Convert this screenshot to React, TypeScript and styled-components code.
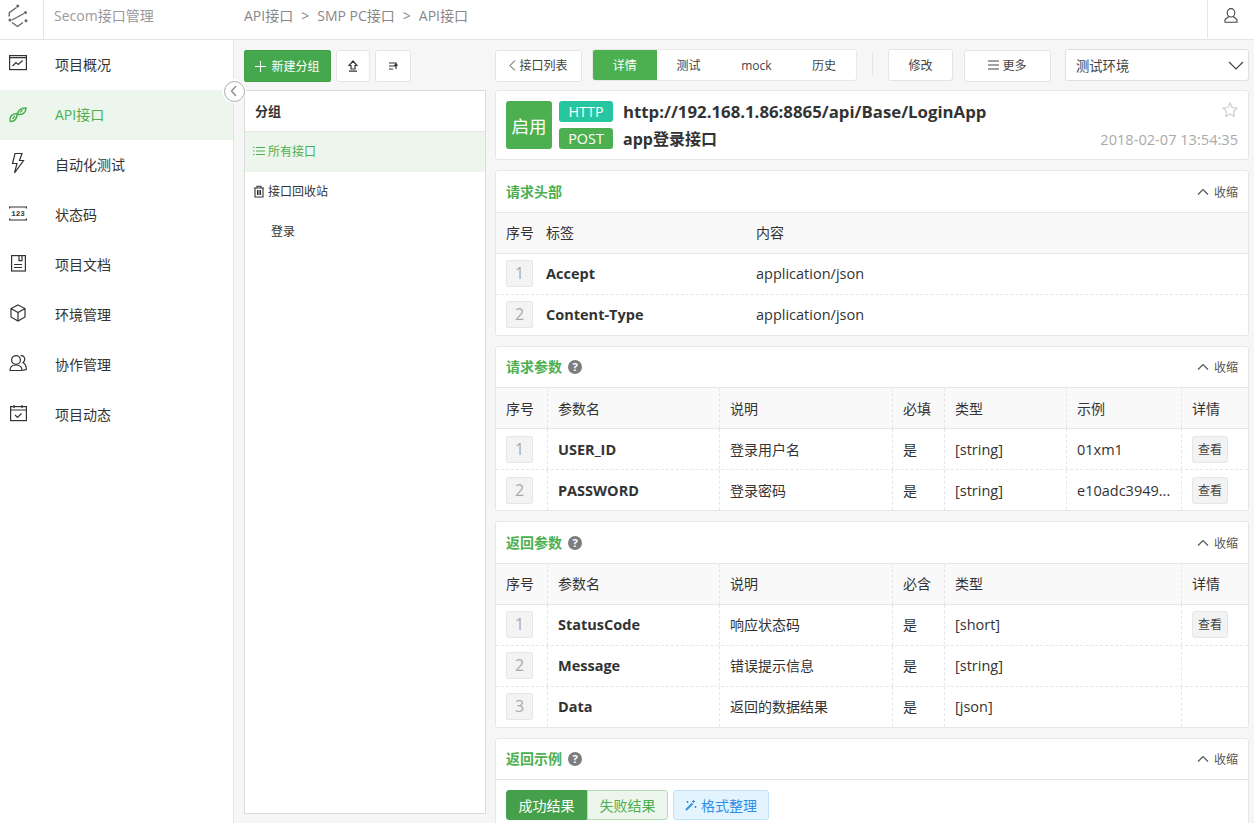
import React from "react";
import styled, { createGlobalStyle } from "styled-components";

const Global = createGlobalStyle`
  html, body { margin: 0; padding: 0; height: 100%; background: #f6f6f6; }
  body { font-family: "Open Sans", "Noto Sans CJK SC", sans-serif; font-size: 14px; color: #333; overflow: hidden; }
  * { box-sizing: border-box; }
`;

const GREEN = "#4caf50";

const Page = styled.div`
  width: 1254px; height: 823px; display: flex; flex-direction: column; overflow: hidden;
`;
const Header = styled.header`
  height: 40px; flex: none; display: flex; background: #fff; border-bottom: 1px solid #e4e4e4;
`;
const LogoCell = styled.div`
  width: 44px; height: 39px; border-right: 1px solid #e4e4e4; padding: 4px 0 0 7px;
`;
const ProjectName = styled.div`
  width: 200px; padding-left: 10px; line-height: 31px; font-size: 14px; color: #999;
`;
const Crumbs = styled.div`
  flex: 1; display: flex; gap: 8px; line-height: 31px; font-size: 14px; color: #888;
`;
const UserCell = styled.div`
  width: 47px; height: 38px; border-left: 1px solid #e4e4e4; display: flex; align-items: center; justify-content: center; padding-bottom: 8px;
`;
const Body = styled.div`
  flex: 1; display: flex; min-height: 0; position: relative;
`;
const Sidebar = styled.nav`
  width: 234px; flex: none; background: #fff; border-right: 1px solid #e4e4e4;
`;
const NavItem = styled.div<{ $active?: boolean }>`
  height: 50px; display: flex; align-items: center; padding: 0 0 2px 9px; gap: 28px; font-size: 14px;
  color: ${(p) => (p.$active ? GREEN : "#333")};
  background: ${(p) => (p.$active ? "#ecf6ec" : "#fff")};
`;
const NavIcon = styled.svg`
  width: 18px; height: 18px; flex: none; fill: none; stroke: currentColor; stroke-width: 1.2; margin-top: -2px; overflow: visible;
`;
const Collapse = styled.div`
  position: absolute; left: 222px; top: 39px; width: 24px; height: 24px; border-radius: 50%; background: #fff; display: flex; align-items: center; justify-content: center;
`;
const CollapseRing = styled.div`
  width: 21px; height: 21px; border-radius: 50%; border: 1.5px solid #aaa; display: flex; align-items: center; justify-content: center;
`;
const LeftCol = styled.div`
  width: 242px; margin-left: 10px; padding-top: 10px; flex: none; display: flex; flex-direction: column;
`;
const BtnRow = styled.div`
  display: flex; gap: 5px; height: 32px; margin-bottom: 8px;
`;
const PrimaryBtn = styled.div`
  width: 87px; height: 32px; background: #46a84c; border-radius: 2px; color: #fff; font-size: 12px; display: flex; align-items: center; justify-content: center; gap: 5px; border: 1px solid #41a047;
`;
const IconBtn = styled.div<{ $w: number }>`
  width: ${(p) => p.$w}px; height: 32px; background: #fff; border: 1px solid #e4e4e4; border-radius: 3px; display: flex; align-items: center; justify-content: center;
`;
const GroupPanel = styled.div`
  width: 242px; height: 724px; background: #fff; border: 1px solid #dcdcdc;
`;
const GroupHead = styled.div`
  height: 41px; line-height: 40px; padding-left: 10px; font-weight: 700; font-size: 13px; border-bottom: 1px solid #e4e4e4;
`;
const GroupItem = styled.div<{ $active?: boolean; $indent?: boolean }>`
  height: 40px; display: flex; align-items: center; gap: 3px; font-size: 12px; padding-bottom: 2px;
  padding-left: ${(p) => (p.$indent ? 26 : 8)}px;
  color: ${(p) => (p.$active ? GREEN : "#333")};
  background: ${(p) => (p.$active ? "#ecf6ec" : "#fff")};
`;
const RightCol = styled.div`
  width: 754px; margin-left: 9px; padding-top: 10px; flex: none; display: flex; flex-direction: column; gap: 10px;
`;
const Toolbar = styled.div`
  height: 30px; display: flex; align-items: flex-start;
`;
const ToolBtn = styled.div<{ $w: number; $ml: number; $up?: boolean }>`
  width: ${(p) => p.$w}px; margin-left: ${(p) => p.$ml}px; margin-top: ${(p) => (p.$up ? -1 : 0)}px; height: 32px; flex: none; background: #fff; border: 1px solid #e4e4e4; border-radius: 3px; font-size: 12px; color: #444; display: flex; align-items: center; justify-content: center; gap: 3px; padding-bottom: ${(p) => (p.$up ? 0 : 2)}px;
`;
const Tabs = styled.div`
  margin: -1px 0 0 10px; width: 265px; height: 32px; flex: none; background: #fff; border: 1px solid #e8e8e8; border-radius: 3px; display: flex; overflow: hidden;
`;
const Tab = styled.div<{ $w: number; $active?: boolean }>`
  width: ${(p) => p.$w}px; font-size: 12px; display: flex; align-items: center; justify-content: center;
  color: ${(p) => (p.$active ? "#fff" : "#444")};
  background: ${(p) => (p.$active ? GREEN : "transparent")};
`;
const Divider = styled.div`
  width: 1px; height: 22px; margin: 3px 0 0 15px; background: #e4e4e4; flex: none;
`;
const SelectBox = styled.div`
  margin: -1px 0 0 14px; width: 184px; height: 32px; flex: none; background: #fff; border: 1px solid #e0e0e0; border-radius: 3px; font-size: 13.3px; color: #444; display: flex; align-items: center; justify-content: space-between; padding: 0 4px 0 10px;
`;
const InfoCard = styled.div`
  height: 70px; background: #fff; border: 1px solid #e6e6e6; border-radius: 3px; padding: 10px; display: flex;
`;
const StateBadge = styled.div`
  width: 46px; height: 48px; background: ${GREEN}; border-radius: 3px; color: #fff; font-size: 17.5px; display: flex; align-items: center; justify-content: center; flex: none;
`;
const MethodCol = styled.div`
  margin-left: 7px; display: flex; flex-direction: column; gap: 6px; flex: none;
`;
const Method = styled.div<{ $c: string }>`
  width: 54px; height: 21px; border-radius: 3px; background: ${(p) => p.$c}; color: #fff; font-size: 14.4px; line-height: 21px; text-align: center;
`;
const TitleCol = styled.div`
  margin-left: 10px; flex: 1; display: flex; flex-direction: column; gap: 5px; font-weight: 700; color: #333;
`;
const UrlLine = styled.div`
  font-size: 16.8px; line-height: 22px;
`;
const NameLine = styled.div`
  font-size: 16px; line-height: 22px;
`;
const CardAside = styled.div`
  flex: none; display: flex; flex-direction: column; align-items: flex-end; justify-content: space-between; height: 48px; padding-top: 1px;
`;
const DateText = styled.div`
  font-size: 14.6px; color: #aaa; line-height: 20px;
`;
const SecHead = styled.div<{ $tall?: boolean }>`
  height: ${(p) => (p.$tall ? 42 : 41)}px; display: flex; align-items: center; padding: 0 10px; border-bottom: 1px solid #e6e6e6;
`;
const SecTitle = styled.div`
  font-size: 14px; font-weight: 700; color: ${GREEN}; line-height: 20px;
`;
const Help = styled.div`
  width: 14px; height: 14px; margin-left: 6px; border-radius: 50%; background: #7d7d7d; color: #fff; font-size: 11px; font-weight: 700; line-height: 14px; text-align: center;
`;
const Fold = styled.div`
  margin-left: auto; display: flex; align-items: center; gap: 5px; font-size: 12px; color: #555;
`;
const Row = styled.div<{ $cols: string; $head?: boolean; $last?: boolean }>`
  display: grid; grid-template-columns: ${(p) => p.$cols};
  height: ${(p) => (p.$last ? 40 : 41)}px;
  background: ${(p) => (p.$head ? "#f9f9f9" : "#fff")};
  border-bottom: ${(p) => (p.$last ? "none" : p.$head ? "1px solid #e6e6e6" : "1px dashed #e6e6e6")};
`;
const Cell = styled.div<{ $dash?: boolean; $bold?: boolean; $cjk?: boolean; $nopad?: boolean }>`
  display: flex; align-items: center; min-width: 0; white-space: nowrap; padding-left: ${(p) => (p.$nopad ? 0 : 10)}px;
  font-size: ${(p) => (p.$cjk ? 14 : 14.5)}px; font-weight: ${(p) => (p.$bold ? 700 : 400)}; color: #333;
  border-right: ${(p) => (p.$dash ? "1px dashed #e6e6e6" : "none")};
`;
const Section = styled.section<{ $raised?: boolean }>`
  background: #fff; border: 1px solid #e6e6e6; border-radius: 3px; flex: none; overflow: hidden;
  ${Cell} { padding-bottom: ${(p) => (p.$raised ? 2 : 0)}px; }
`;
const IndexBadge = styled.div`
  width: 27px; height: 27px; background: #f3f3f3; border: 1px solid #e6e6e6; border-radius: 2px; color: #aaa; font-size: 16px; display: flex; align-items: center; justify-content: center;
`;
const ViewBtn = styled.div`
  width: 36px; height: 27px; background: #f3f3f3; border: 1px solid #e6e6e6; border-radius: 3px; font-size: 12px; color: #444; display: flex; align-items: center; justify-content: center;
`;
const ExampleBar = styled.div`
  display: flex; padding: 10px; height: 50px;
`;
const ResultTab = styled.div<{ $on?: boolean }>`
  width: 81px; height: 30px; font-size: 14px; display: flex; align-items: center; justify-content: center;
  color: ${(p) => (p.$on ? "#fff" : GREEN)};
  background: ${(p) => (p.$on ? "#44a04a" : "#ecf6ec")};
  border: 1px solid ${(p) => (p.$on ? "#44a04a" : "#b5dcb7")};
  border-radius: ${(p) => (p.$on ? "3px 0 0 3px" : "0 3px 3px 0")};
`;
const FormatBtn = styled.div`
  margin-left: 5px; width: 96px; height: 30px; background: #e3f4fe; border: 1px solid #bfe2f8; border-radius: 3px; color: #2f8fe6; font-size: 14px; display: flex; align-items: center; justify-content: center; gap: 4px;
`;
const Chevron = styled.svg`
  width: 12px; height: 12px; fill: none; stroke: #555; stroke-width: 1.2;
`;

const nav: { label: string; icon: React.ReactNode; active?: boolean }[] = [
  { label: "项目概况", icon: <><rect x="0.6" y="1.6" width="16.8" height="14" /><path d="M0.6 3.6h16.8M3.5 12l3.5-3.5 2.2 2 4.5-4" /></> },
  { label: "API接口", active: true, icon: <><path d="M1.5 17.5C0 13 3 9.5 8 9.5c.5 4.5-2 8-6.5 8zM9 10.5C8.5 6.5 11.5 4 17 4c0 4.5-3 7-8 6.5z" strokeWidth="1.5" /><path d="M3.5 15l2.5-3M11 8.5l2.5-2.5" /></> },
  { label: "自动化测试", icon: <path d="M6 -.5h7L10.5 6.5h4L5.5 19 8 9.5H3.5z" /> },
  { label: "状态码", icon: <><path d="M0.6 4.5V3h16.8v1.5M0.6 14.5V16h16.8v-1.5" /><text x="9" y="12.4" fontSize="7.5" fontWeight="700" textAnchor="middle" fill="currentColor" stroke="none" fontFamily="Liberation Mono">123</text></> },
  { label: "项目文档", icon: <><rect x="2.6" y="1.6" width="13.8" height="15.4" /><path d="M10 1.6v5h3v-5M5 10.5h8M5 13.5h8" /></> },
  { label: "环境管理", icon: <path d="M9 1l7 3.5v8.5L9 17l-7-4V4.5L9 1zM2 4.5L9 8.5l7-4M9 8.5V17" /> },
  { label: "协作管理", icon: <><circle cx="7" cy="6" r="4.4" /><path d="M1 16.5c0-3.5 2.5-5.5 6-5.5s6 2 6 5.5H1zM11.5 1.8c3-.6 5 2 4 4.7-.3 1-1 1.6-1.6 2.3 2 .8 3.4 3 3.4 6.7l-3.5.8" /></> },
  { label: "项目动态", icon: <><rect x="1.6" y="2.6" width="15.8" height="14" /><path d="M1.6 6h15.8M5 1v3M13 1v3M6 11l2.5 2.5L12.5 9.5" /></> },
];

const cols2 = "52px 172px 173px 52px 122px 115px 1fr";
const cols3 = "52px 172px 173px 52px 237px 1fr";
const cols1 = "50px 210px 1fr";

function SectionHead({ title, help, tall }: { title: string; help?: boolean; tall?: boolean }) {
  return (
    <SecHead $tall={tall}>
      <SecTitle>{title}</SecTitle>
      {help && <Help>?</Help>}
      <Fold>
        <Chevron viewBox="0 0 12 12"><path d="M1 8.5L6 3.5l5 5" /></Chevron>
        收缩
      </Fold>
    </SecHead>
  );
}

function HeadRow({ names, cols }: { names: string[]; cols: string }) {
  return (
    <Row $cols={cols} $head>
      {names.map((n, i) => (
        <Cell key={n} $cjk $dash={i < names.length - 1}>{n}</Cell>
      ))}
    </Row>
  );
}

export default function App() {
  return (
    <Page>
      <Global />
      <Header>
        <LogoCell>
          <svg width="22" height="24" viewBox="0 0 22 24" fill="none" stroke="#666" strokeWidth="1.4">
            <path d="M9.5 3.5L2.5 8.5 2 12.5M5 16L17 9.5M5 18.5L10.5 22.5 16 18.5" />
            <g fill="#666" stroke="none">
              <circle cx="10.7" cy="2" r="1.5" /><circle cx="18.5" cy="8.5" r="1.5" /><circle cx="3" cy="16" r="1.5" /><circle cx="19" cy="16.7" r="1.5" />
            </g>
          </svg>
        </LogoCell>
        <ProjectName>Secom接口管理</ProjectName>
        <Crumbs>
          <span>API接口</span><span>&gt;</span><span>SMP PC接口</span><span>&gt;</span><span>API接口</span>
        </Crumbs>
        <UserCell>
          <svg width="14" height="15" viewBox="0 0 14 15" fill="none" stroke="#444" strokeWidth="1.1">
            <ellipse cx="7" cy="4.8" rx="3.8" ry="4.2" />
            <path d="M4.8 8.5L1 11.5v2.8h12v-2.8L9.2 8.5" />
          </svg>
        </UserCell>
      </Header>
      <Body>
        <Sidebar>
          {nav.map((n) => (
            <NavItem key={n.label} $active={n.active}>
              <NavIcon viewBox="0 0 18 18">{n.icon}</NavIcon>
              {n.label}
            </NavItem>
          ))}
        </Sidebar>
        <Collapse>
          <CollapseRing>
            <svg width="10" height="12" viewBox="0 0 10 12" fill="none" stroke="#888" strokeWidth="1.3"><path d="M7 1L2.5 6 7 11" /></svg>
          </CollapseRing>
        </Collapse>
        <LeftCol>
          <BtnRow>
            <PrimaryBtn>
              <svg width="11" height="11" viewBox="0 0 11 11" stroke="#fff" strokeWidth="1.1"><path d="M5.5 0v11M0 5.5h11" /></svg>
              新建分组
            </PrimaryBtn>
            <IconBtn $w={34}>
              <svg width="10" height="12" viewBox="0 0 10 12" fill="none" stroke="#333" strokeWidth="1.2"><path d="M5 1L1 5.5h2v3.5h4V5.5h2L5 1zM1 11.2h8" /></svg>
            </IconBtn>
            <IconBtn $w={36}>
              <svg width="11" height="10" viewBox="0 0 11 10" fill="none" stroke="#333" strokeWidth="1.1"><path d="M1 2h8M1 5h8M1 8h4M8 8V4M6.5 4.5L8 3l1.5 1.5" /></svg>
            </IconBtn>
          </BtnRow>
          <GroupPanel>
            <GroupHead>分组</GroupHead>
            <GroupItem $active>
              <svg width="12" height="10" viewBox="0 0 12 10" fill="none" stroke={GREEN} strokeWidth="1.1"><path d="M3 1.5h9M3 5h9M3 8.5h9M0 1.5h1.5M0 5h1.5M0 8.5h1.5" /></svg>
              所有接口
            </GroupItem>
            <GroupItem>
              <svg width="12" height="13" viewBox="0 0 12 13" fill="none" stroke="#333" strokeWidth="1.1"><path d="M1 3h10M4 3V1.2h4V3M2 3v9h8V3M4.5 5v5M6 5v5M7.5 5v5" /></svg>
              接口回收站
            </GroupItem>
            <GroupItem $indent>登录</GroupItem>
          </GroupPanel>
        </LeftCol>
        <RightCol>
          <Toolbar>
            <ToolBtn $w={87} $ml={0}>
              <svg width="7" height="11" viewBox="0 0 7 11" fill="none" stroke="#444" strokeWidth="1"><path d="M6 .5L1 5.5l5 5" /></svg>
              接口列表
            </ToolBtn>
            <Tabs>
              <Tab $w={64} $active>详情</Tab>
              <Tab $w={64}>测试</Tab>
              <Tab $w={72}>mock</Tab>
              <Tab $w={64}>历史</Tab>
            </Tabs>
            <Divider />
            <ToolBtn $w={65} $ml={15} $up>修改</ToolBtn>
            <ToolBtn $w={87} $ml={11}>
              <svg width="11" height="10" viewBox="0 0 11 10" stroke="#444" strokeWidth="1"><path d="M0 1h11M0 5h11M0 9h11" /></svg>
              更多
            </ToolBtn>
            <SelectBox>
              测试环境
              <svg width="16" height="9" viewBox="0 0 16 9" fill="none" stroke="#444" strokeWidth="1.2"><path d="M1 1l7 7 7-7" /></svg>
            </SelectBox>
          </Toolbar>
          <InfoCard>
            <StateBadge>启用</StateBadge>
            <MethodCol>
              <Method $c="#26c6a0">HTTP</Method>
              <Method $c={GREEN}>POST</Method>
            </MethodCol>
            <TitleCol>
              <UrlLine>http://192.168.1.86:8865/api/Base/LoginApp</UrlLine>
              <NameLine>app登录接口</NameLine>
            </TitleCol>
            <CardAside>
              <svg width="16" height="15" viewBox="0 0 16 15" fill="none" stroke="#ccc" strokeWidth="1.1"><path d="M8 1l2.1 4.5 4.9.6-3.6 3.4.9 4.9L8 11.9l-4.3 2.5.9-4.9L1 6.1l4.9-.6L8 1z" /></svg>
              <DateText>2018-02-07 13:54:35</DateText>
            </CardAside>
          </InfoCard>
          <Section $raised>
            <SectionHead title="请求头部" tall />
            <Row $cols={cols1} $head>
              <Cell $cjk>序号</Cell><Cell $cjk $nopad>标签</Cell><Cell $cjk $nopad>内容</Cell>
            </Row>
            <Row $cols={cols1}>
              <Cell><IndexBadge>1</IndexBadge></Cell><Cell $nopad $bold>Accept</Cell><Cell $nopad>application/json</Cell>
            </Row>
            <Row $cols={cols1} $last>
              <Cell><IndexBadge>2</IndexBadge></Cell><Cell $nopad $bold>Content-Type</Cell><Cell $nopad>application/json</Cell>
            </Row>
          </Section>
          <Section>
            <SectionHead title="请求参数" help />
            <HeadRow cols={cols2} names={["序号", "参数名", "说明", "必填", "类型", "示例", "详情"]} />
            <Row $cols={cols2}>
              <Cell $dash><IndexBadge>1</IndexBadge></Cell>
              <Cell $dash $bold>USER_ID</Cell>
              <Cell $dash $cjk>登录用户名</Cell>
              <Cell $dash $cjk>是</Cell>
              <Cell $dash>[string]</Cell>
              <Cell $dash>01xm1</Cell>
              <Cell><ViewBtn>查看</ViewBtn></Cell>
            </Row>
            <Row $cols={cols2} $last>
              <Cell $dash><IndexBadge>2</IndexBadge></Cell>
              <Cell $dash $bold>PASSWORD</Cell>
              <Cell $dash $cjk>登录密码</Cell>
              <Cell $dash $cjk>是</Cell>
              <Cell $dash>[string]</Cell>
              <Cell $dash>e10adc3949...</Cell>
              <Cell><ViewBtn>查看</ViewBtn></Cell>
            </Row>
          </Section>
          <Section $raised>
            <SectionHead title="返回参数" help tall />
            <HeadRow cols={cols3} names={["序号", "参数名", "说明", "必含", "类型", "详情"]} />
            <Row $cols={cols3}>
              <Cell $dash><IndexBadge>1</IndexBadge></Cell>
              <Cell $dash $bold>StatusCode</Cell>
              <Cell $dash $cjk>响应状态码</Cell>
              <Cell $dash $cjk>是</Cell>
              <Cell $dash>[short]</Cell>
              <Cell><ViewBtn>查看</ViewBtn></Cell>
            </Row>
            <Row $cols={cols3}>
              <Cell $dash><IndexBadge>2</IndexBadge></Cell>
              <Cell $dash $bold>Message</Cell>
              <Cell $dash $cjk>错误提示信息</Cell>
              <Cell $dash $cjk>是</Cell>
              <Cell $dash>[string]</Cell>
              <Cell />
            </Row>
            <Row $cols={cols3} $last>
              <Cell $dash><IndexBadge>3</IndexBadge></Cell>
              <Cell $dash $bold>Data</Cell>
              <Cell $dash $cjk>返回的数据结果</Cell>
              <Cell $dash $cjk>是</Cell>
              <Cell $dash>[json]</Cell>
              <Cell />
            </Row>
          </Section>
          <Section>
            <SectionHead title="返回示例" help />
            <ExampleBar>
              <ResultTab $on>成功结果</ResultTab>
              <ResultTab>失败结果</ResultTab>
              <FormatBtn>
                <svg width="12" height="12" viewBox="0 0 12 12" fill="none" stroke="#2f8fe6" strokeWidth="2"><path d="M1 11l6.5-6.5" /><path d="M8.5 1v3M7 2.5h3M2.5 2v2M1.5 3h2M10.5 7v2M9.5 8h2" strokeWidth="1" /></svg>
                格式整理
              </FormatBtn>
            </ExampleBar>
          </Section>
        </RightCol>
      </Body>
    </Page>
  );
}
